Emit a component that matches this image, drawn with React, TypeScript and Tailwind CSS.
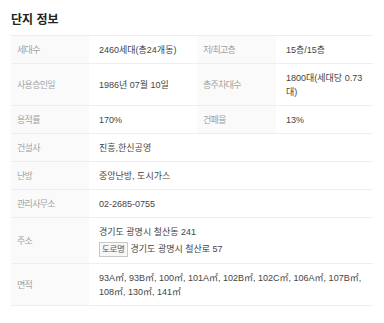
import React from 'react'

const FONT = '"Liberation Sans", "Noto Sans CJK KR", sans-serif'

type Cell = { label: string; value: React.ReactNode }

const Label = ({ children }: { children: React.ReactNode }) => (
  <td className="bg-[#fafafa] text-[#a3a3a3] tracking-[-0.7px] pl-[6px] pr-1 py-[6.5px] align-middle">{children}</td>
)

const Value = ({ children, colSpan }: { children: React.ReactNode; colSpan?: number }) => (
  <td colSpan={colSpan} className="text-[#444] pl-[10px] pr-[4px] py-[6.5px] align-middle">{children}</td>
)

export default function App() {
  const pairs: [Cell, Cell][] = [
    [{ label: '세대수', value: '2460세대(총24개동)' }, { label: '저/최고층', value: '15층/15층' }],
    [{ label: '사용승인일', value: '1986년 07월 10일' }, { label: '총주차대수', value: '1800대(세대당 0.73대)' }],
    [{ label: '용적률', value: '170%' }, { label: '건폐율', value: '13%' }],
  ]
  const singles: Cell[] = [
    { label: '건설사', value: '진흥,한신공영' },
    { label: '난방', value: '중앙난방, 도시가스' },
    { label: '관리사무소', value: '02-2685-0755' },
    {
      label: '주소',
      value: (
        <div>
          <div>경기도 광명시 철산동 241</div>
          <div className="flex items-center gap-[3px] mt-[3px]">
            <span className="border border-[#c8c8c8] bg-[#f7f7f7] text-[#555] text-[8.5px] leading-[13px] px-[2px] tracking-[-0.3px]">도로명</span>
            <span>경기도 광명시 철산로 57</span>
          </div>
        </div>
      ),
    },
    { label: '면적', value: '93A㎡, 93B㎡, 100㎡, 101A㎡, 102B㎡, 102C㎡, 106A㎡, 107B㎡, 108㎡, 130㎡, 141㎡' },
  ]

  return (
    <div className="bg-white w-[384px] h-[323px] px-[11px] pt-[12px]" style={{ fontFamily: FONT }}>
      <h2 className="text-[12px] leading-[16px] font-bold text-[#222] mb-[7px]">단지 정보</h2>
      <table className="w-full border-collapse text-[9px] leading-[14px] table-fixed">
        <colgroup>
          <col className="w-[78px]" />
          <col className="w-[108px]" />
          <col className="w-[79px]" />
          <col />
        </colgroup>
        <tbody>
          {pairs.map(([a, b]) => (
            <tr key={a.label} className="border-y border-[#eee]">
              <Label>{a.label}</Label>
              <Value>{a.value}</Value>
              <Label>{b.label}</Label>
              <Value>{b.value}</Value>
            </tr>
          ))}
          {singles.map(c => (
            <tr key={c.label} className="border-y border-[#eee]">
              <Label>{c.label}</Label>
              <Value colSpan={3}>{c.value}</Value>
            </tr>
          ))}
        </tbody>
      </table>
    </div>
  )
}
